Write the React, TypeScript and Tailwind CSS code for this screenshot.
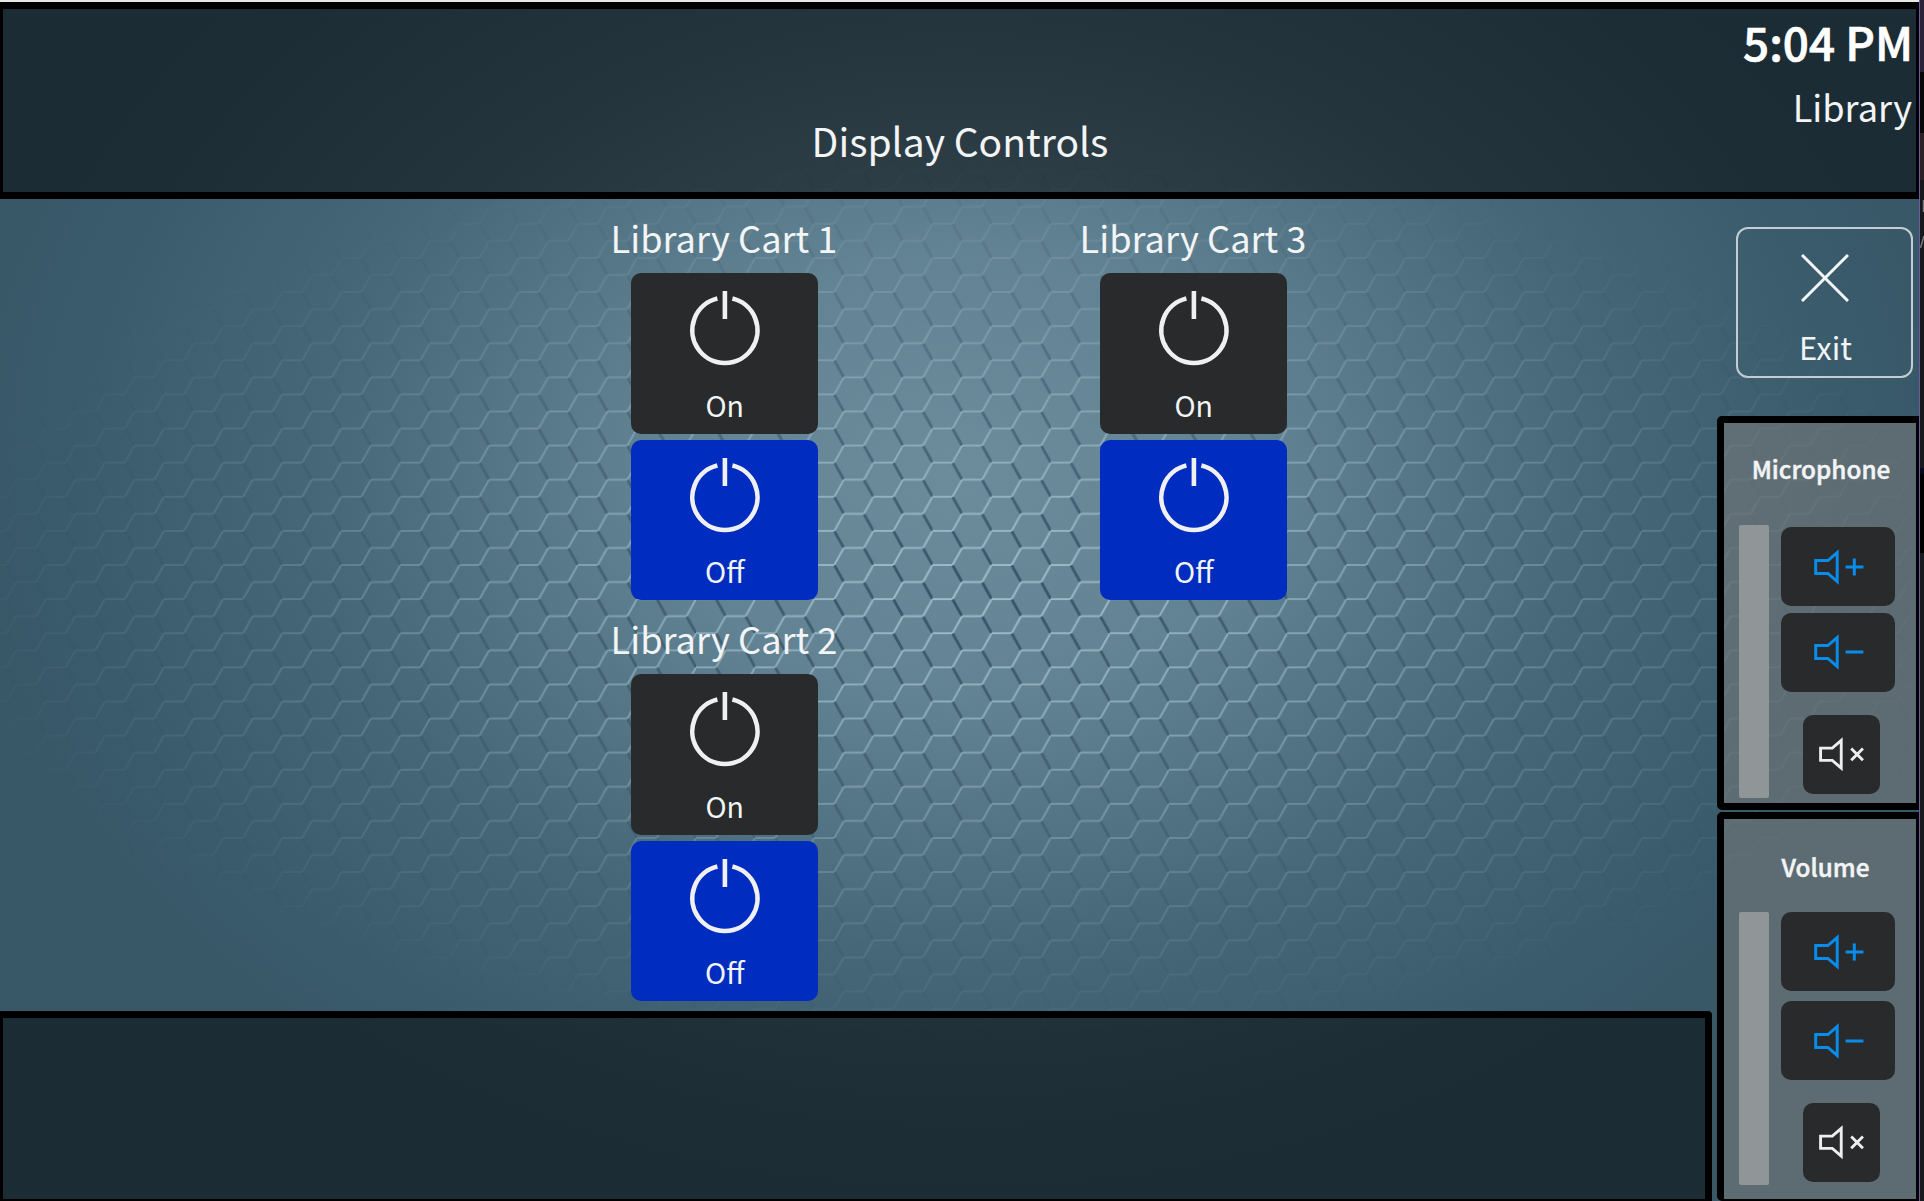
import React from "react";

function Honeycomb() {
  return (
    <svg className="absolute inset-0 h-full w-full" viewBox="0 0 1919 1199" preserveAspectRatio="none">
      <defs>
        <pattern id="hex" patternUnits="userSpaceOnUse" x="873.4" y="563" width="59.12" height="34.12">
          <g fill="none" strokeWidth="2.1">
            <path d="M20 0L29.56 17.06M49.56 17.06L59.12 34.12" stroke="#2a4a5c" strokeOpacity="0.85" strokeWidth="2.8" />
            <g stroke="#a6c8d6" strokeOpacity="0.85">
              <path d="M0 0H20M0 34.12H20M29.56 17.06H49.56" />
              <path d="M20 34.12L29.56 17.06M49.56 17.06L59.12 0" />
            </g>
          </g>
        </pattern>
        <radialGradient id="glow" gradientUnits="userSpaceOnUse" cx="0" cy="0" r="1" gradientTransform="translate(960 470) scale(990 740)">
          <stop offset="0" stopColor="#6c8c9c" />
          <stop offset="0.3" stopColor="#628393" />
          <stop offset="0.65" stopColor="#456777" />
          <stop offset="0.9" stopColor="#395b6b" />
          <stop offset="1" stopColor="#385868" />
        </radialGradient>
        <radialGradient id="fade" gradientUnits="userSpaceOnUse" cx="0" cy="0" r="1" gradientTransform="translate(970 590) scale(1030 455)">
          <stop offset="0" stopColor="#fff" />
          <stop offset="0.25" stopColor="#b8b8b8" />
          <stop offset="0.65" stopColor="#464646" />
          <stop offset="1" stopColor="#000" />
        </radialGradient>
        <mask id="hexmask" maskUnits="userSpaceOnUse" x="0" y="0" width="1919" height="1199">
          <rect width="1919" height="1199" fill="url(#fade)" />
        </mask>
      </defs>
      <rect width="1919" height="1199" fill="url(#glow)" />
      <rect width="1919" height="1199" fill="url(#hex)" mask="url(#hexmask)" />
    </svg>
  );
}

function PowerButton({ label, active }: { label: string; active?: boolean }) {
  return (
    <button
      className={
        "flex h-[160.5px] w-[187px] flex-col items-center rounded-[10px] " +
        (active ? "bg-[#002dc0]" : "bg-[#282a2b]")
      }
    >
      <svg className="mt-[16px] h-[78px] w-[78px]" viewBox="0 0 78 78" fill="none" stroke="#f0f0f2" strokeWidth="4.6">
        <path d="M47.4 9.6A32.6 32.6 0 1 1 32.4 9.6" />
        <path d="M39.9 2V30" />
      </svg>
      <span className="mt-[16.5px] pl-[1.5px] text-[28.5px] leading-[42px]">{label}</span>
    </button>
  );
}

function Cart({ name }: { name: string }) {
  return (
    <section className="flex w-[260px] flex-col items-center">
      <h2 className="h-[74px] whitespace-nowrap pt-[14.5px] text-[36.2px] leading-[46px]">{name}</h2>
      <div className="flex flex-col gap-[6px]">
        <PowerButton label="On" />
        <PowerButton label="Off" active />
      </div>
    </section>
  );
}

function Speaker({ kind }: { kind: "plus" | "minus" | "mute" }) {
  const mute = kind === "mute";
  return (
    <svg
      className={mute ? "h-[36.5px] w-[50px]" : "h-[38px] w-[52px]"}
      viewBox="0 0 52 38"
      fill="none"
      stroke={mute ? "#eeeeee" : "#0a8cea"}
      strokeWidth="3"
    >
      <path d="M3.7 12.6H15.900L25.200 4.600V33.400L15.900 25.400H3.700Z" />
      {kind === "plus" && <path d="M33.600 19H51.400M42.300 10.400V27.600" />}
      {kind === "minus" && <path d="M33.600 19H51.400" />}
      {mute && <path d="M35.600 13L47.800 25.200M47.800 13L35.600 25.200" />}
    </svg>
  );
}

function AudioPanel({ title, volume }: { title: string; volume?: boolean }) {
  return (
    <section
      className={
        "rounded-l-[5px] border-y-[7px] border-l-[7px] border-r-[3px] border-black bg-[#827e7c]/50 bg-clip-padding " +
        (volume ? "h-[389px] border-b-[2px]" : "h-[394px]")
      }
    >
      <h3
        className={
          "h-[64px] text-center text-[24.3px] font-medium leading-[36px] [-webkit-text-stroke:0.5px_#f2f4f5] " +
          (volume ? "pl-[11px] pt-[30px]" : "pl-[2px] pt-[28px]")
        }
      >
        {title}
      </h3>
      <div className={"flex pl-[15px] " + (volume ? "mt-[29px]" : "mt-[38px]")}>
        <div className="h-[273px] w-[30px] rounded-[2px] bg-[#909698]" />
        <div className="ml-[12px] flex w-[114px] flex-col">
          <div className={"flex flex-col " + (volume ? "gap-[10px]" : "gap-[6.5px] pt-[2px]")}>
            <button className="flex h-[79px] items-center justify-center rounded-[10px] bg-[#282a2b]">
              <Speaker kind="plus" />
            </button>
            <button className="flex h-[79px] items-center justify-center rounded-[10px] bg-[#282a2b]">
              <Speaker kind="minus" />
            </button>
          </div>
          <button className="ml-[22px] mt-[23px] flex h-[79px] w-[77px] items-center justify-center rounded-[10px] bg-[#282a2b]">
            <Speaker kind="mute" />
          </button>
        </div>
      </div>
    </section>
  );
}

export default function App() {
  return (
    <div className="flex h-[1201px] w-[1924px] overflow-hidden bg-[#171a1e] font-['Noto_Sans_CJK_SC','Noto_Sans',sans-serif] text-[#f2f4f5]">
      <div className="flex w-[1919px] flex-col">
        <div className="h-[2px] shrink-0 bg-[#e8e8e8]" />
        <div className="relative isolate h-[1199px] overflow-hidden">
          <Honeycomb />
          <div className="relative flex h-full flex-col">
            <header className="grid h-[197px] shrink-0 grid-cols-[1fr_auto_1fr] border-x-[3px] border-y-[7px] border-black bg-black/50">
              <div />
              <h1 className="mt-[102.5px] pl-px text-[39px] leading-[56px]">Display Controls</h1>
              <div className="pr-[4px] text-right">
                <p className="-mr-px mt-[1.5px] text-[45.8px] font-medium leading-[60px] text-white [-webkit-text-stroke:0.7px_#fff]">5:04 PM</p>
                <p className="mt-[9px] text-[36.2px] leading-[52px]">Library</p>
              </div>
            </header>
            <div className="flex flex-1">
              <div className="flex w-[1712px] flex-col">
                <main className="flex h-[812px] gap-[209px] pl-[594px]">
                  <div className="flex flex-col">
                    <Cart name="Library Cart 1" />
                    <Cart name="Library Cart 2" />
                  </div>
                  <Cart name="Library Cart 3" />
                </main>
                <footer className="flex-1 rounded-tr-[4px] border-x-[3px] border-b-[2px] border-r-[7px] border-t-[7px] border-black bg-black/50" />
              </div>
              <aside className="flex w-[207px] flex-col pl-[5px]">
                <div className="h-[217px] pl-[19px] pt-[28px]">
                  <button className="flex h-[151px] w-[177px] flex-col items-center rounded-[12px] border-2 border-[#c3cdd2]">
                    <svg className="mt-[25px] h-[48px] w-[48px]" viewBox="0 0 48 48" stroke="#f2f4f5" strokeWidth="3">
                      <path d="M1 1L47 47M47 1L1 47" />
                    </svg>
                    <span className="mt-[23px] pl-[2px] text-[31px] leading-[44px]">Exit</span>
                  </button>
                </div>
                <div className="flex flex-col gap-[2px]">
                  <AudioPanel title="Microphone" />
                  <AudioPanel title="Volume" volume />
                </div>
              </aside>
            </div>
          </div>
        </div>
      </div>
      <div className="w-px bg-[#6f5a9a]" />
      <div className="flex flex-1 flex-col">
        <div className="h-[72px] bg-[#2a2238]" />
        <div className="h-[61px] bg-[#07070a]" />
        <div className="h-[47px] bg-[#2a2025]" />
        <svg className="h-[288px] w-[4px] bg-[#16181d]" viewBox="0 0 4 288" stroke="#77787c" strokeWidth="1.5">
          <path d="M3.500 20V32M0.500 68L4 56" />
        </svg>
        <div className="h-[6px] bg-[#05071c]" />
        <div className="h-[79px] bg-black" />
      </div>
    </div>
  );
}
